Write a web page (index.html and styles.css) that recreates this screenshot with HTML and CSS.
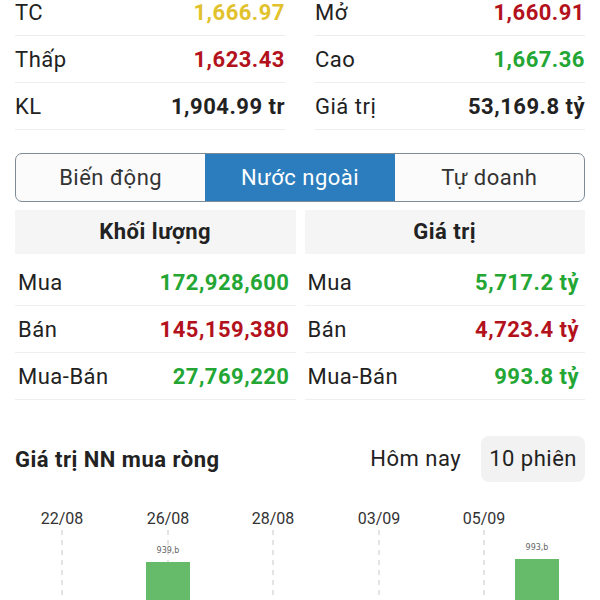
FILE: index.html
```html
<!DOCTYPE html>
<html lang="vi">
<head>
    <meta charset="UTF-8">
    <meta name="viewport" content="width=device-width, initial-scale=1.0">
    <title>Thị trường</title>
    <link rel="stylesheet" href="styles.css">
</head>
<body>
    <div class="stats">
        <div class="stat-row"><span>TC</span><b class="yellow">1,666.97</b></div>
        <div class="stat-row"><span>Mở</span><b class="red">1,660.91</b></div>
        <div class="stat-row"><span>Thấp</span><b class="red">1,623.43</b></div>
        <div class="stat-row"><span>Cao</span><b class="green">1,667.36</b></div>
        <div class="stat-row"><span>KL</span><b>1,904.99 tr</b></div>
        <div class="stat-row"><span>Giá trị</span><b>53,169.8 tỷ</b></div>
    </div>

    <div class="tabs">
        <div class="tab">Biến động</div>
        <div class="tab active">Nước ngoài</div>
        <div class="tab">Tự doanh</div>
    </div>

    <div class="foreign">
        <div class="foreign-col">
            <div class="foreign-head">Khối lượng</div>
            <div class="foreign-rows">
                <div class="foreign-row"><span>Mua</span><b class="green">172,928,600</b></div>
                <div class="foreign-row"><span>Bán</span><b class="red">145,159,380</b></div>
                <div class="foreign-row"><span>Mua-Bán</span><b class="green">27,769,220</b></div>
            </div>
        </div>
        <div class="foreign-col">
            <div class="foreign-head">Giá trị</div>
            <div class="foreign-rows">
                <div class="foreign-row"><span>Mua</span><b class="green">5,717.2 tỷ</b></div>
                <div class="foreign-row"><span>Bán</span><b class="red">4,723.4 tỷ</b></div>
                <div class="foreign-row"><span>Mua-Bán</span><b class="green">993.8 tỷ</b></div>
            </div>
        </div>
    </div>

    <div class="chart-head">
        <p class="chart-title">Giá trị NN mua ròng</p>
        <div class="range">
            <span class="range-item">Hôm nay</span>
            <span class="range-item selected">10 phiên</span>
        </div>
    </div>

    <svg class="chart" width="600" height="112" viewBox="0 0 600 112">
        <g class="grid">
            <line x1="62" y1="42" x2="62" y2="112"></line>
            <line x1="168" y1="42" x2="168" y2="112"></line>
            <line x1="273" y1="42" x2="273" y2="112"></line>
            <line x1="379" y1="42" x2="379" y2="112"></line>
            <line x1="484" y1="42" x2="484" y2="112"></line>
        </g>
        <g class="dates">
            <text x="62" y="36">22/08</text>
            <text x="168" y="36">26/08</text>
            <text x="273" y="36">28/08</text>
            <text x="379" y="36">03/09</text>
            <text x="484" y="36">05/09</text>
        </g>
        <rect class="bar" x="146" y="74" width="44" height="38"></rect>
        <rect class="bar" x="515" y="71" width="44" height="41"></rect>
        <text class="bar-label" x="168" y="65">939,b</text>
        <text class="bar-label" x="537" y="62">993,b</text>
    </svg>
</body>
</html>
```

FILE: styles.css
```css
body {
    margin: 0;
    background-color: white;
    color: #222;
    font-family: Roboto, "Noto Sans", Arial, sans-serif;
    font-size: 22px;
    letter-spacing: 0.5px;
    overflow: hidden;
}

b {
    font-weight: 700;
}

.yellow {
    color: #e2c22c;
}

.red {
    color: #b3121d;
}

.green {
    color: #23a634;
}

/* chỉ số đầu trang */
.stats {
    display: grid;
    grid-template-columns: 1fr 1fr;
    column-gap: 30px;
    padding: 0 15px;
    margin-top: -11px;
}

.stat-row {
    display: flex;
    justify-content: space-between;
    align-items: center;
    height: 46px;
    border-bottom: 1px solid #ededed;
}

/* tabs */
.tabs {
    display: flex;
    margin: 23px 15px 0;
    border: 1px solid #7d8b96;
    border-radius: 7px;
    overflow: hidden;
    background-color: #fbfbfb;
}

.tab {
    flex: 1;
    text-align: center;
    line-height: 47px;
    color: #333;
}

.tab.active {
    background-color: #2b7dbd;
    color: white;
}

/* nước ngoài */
.foreign {
    display: grid;
    grid-template-columns: 1fr 1fr;
    column-gap: 9px;
    margin: 8px 15px 0;
}

.foreign-head {
    height: 44px;
    line-height: 44px;
    text-align: center;
    font-weight: 700;
    background-color: #f5f5f5;
}

.foreign-rows {
    margin-top: 5px;
}

.foreign-row {
    display: flex;
    justify-content: space-between;
    align-items: center;
    height: 46px;
    padding: 0 6px 0 3px;
    border-bottom: 1px solid #efefef;
}

/* biểu đồ */
.chart-head {
    display: flex;
    justify-content: space-between;
    align-items: center;
    margin-top: 36px;
    padding: 0 15px;
}

.chart-title {
    margin: 0;
    font-weight: 700;
}

.range {
    display: flex;
    align-items: center;
    gap: 12px;
}

.range-item {
    line-height: 46px;
    padding: 0 8px;
    border-radius: 8px;
}

.range-item.selected {
    background-color: #f2f2f2;
}

.chart {
    display: block;
    margin-top: 6px;
}

.grid line {
    stroke: #c8c8c8;
    stroke-width: 1;
    stroke-dasharray: 5 5;
}

.dates text {
    font-family: Roboto, Arial, sans-serif;
    font-size: 16px;
    letter-spacing: 0;
    fill: #333;
    text-anchor: middle;
}

.bar {
    fill: #66bb6a;
}

.bar-label {
    font-family: "DejaVu Sans", Arial, sans-serif;
    font-size: 8px;
    letter-spacing: 0;
    fill: #666;
    text-anchor: middle;
}
```
